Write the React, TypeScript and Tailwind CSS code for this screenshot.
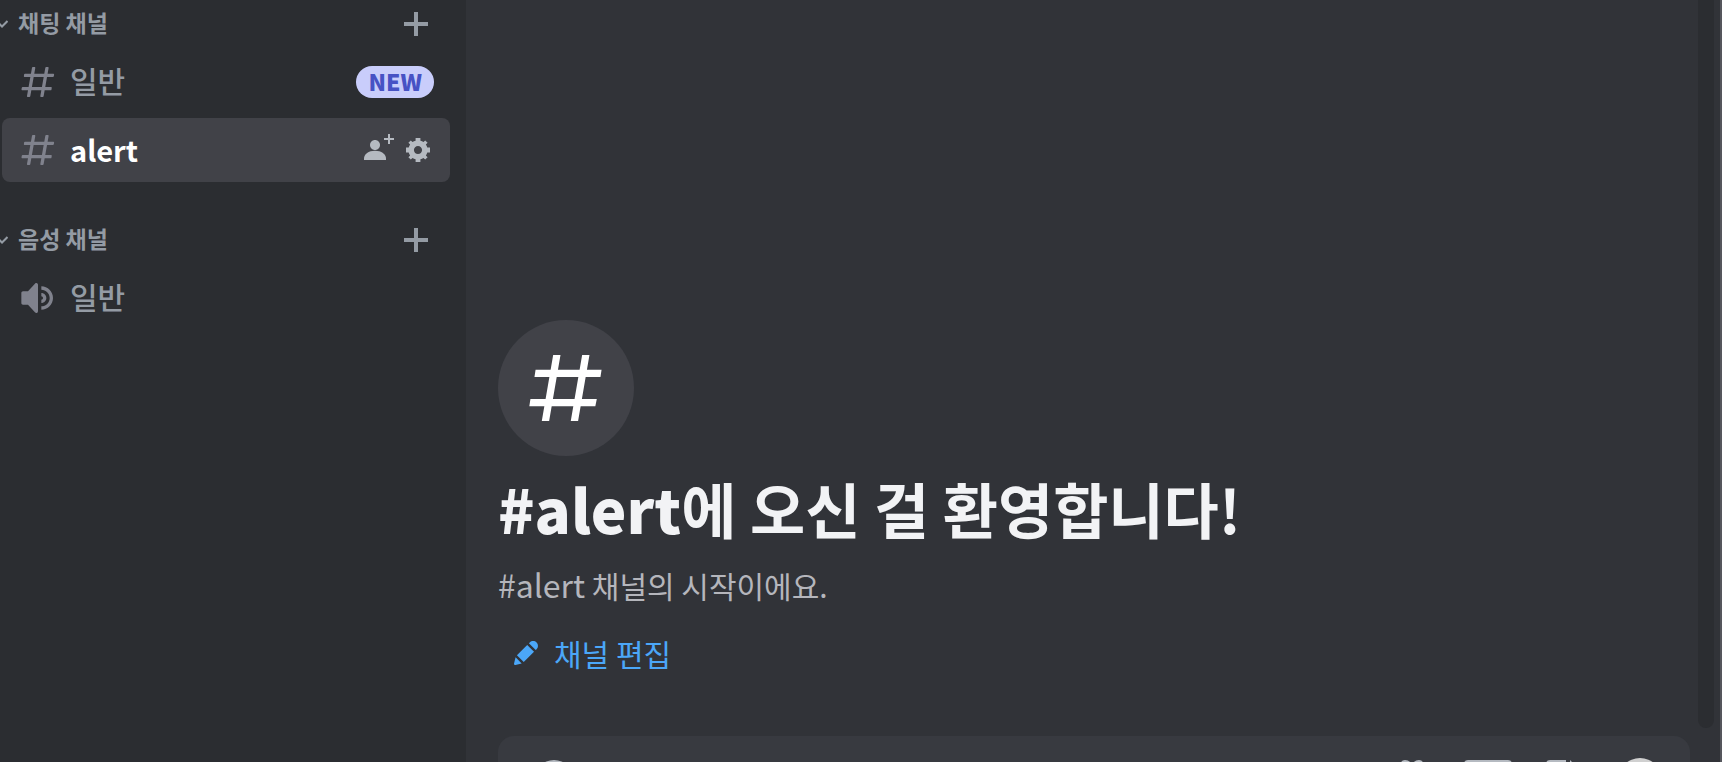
import React from 'react';

interface IconProps {
  className?: string;
}

interface CategoryProps {
  name: string;
  className?: string;
  children: React.ReactNode;
}

function HashIcon({ className }: IconProps) {
  return (
    <svg className={className} viewBox="0 0 24 24" fill="currentColor" aria-hidden="true">
      <path
        fillRule="evenodd"
        clipRule="evenodd"
        d="M5.88657 21C5.57547 21 5.3399 20.7189 5.39427 20.4126L6.00001 17H2.59511C2.28449 17 2.04905 16.7198 2.10259 16.4138L2.27759 15.4138C2.31946 15.1746 2.52722 15 2.77011 15H6.35001L7.41001 9H4.00511C3.69449 9 3.45905 8.71977 3.51259 8.41381L3.68759 7.41381C3.72946 7.17456 3.93722 7 4.18011 7H7.76001L8.39677 3.41262C8.43914 3.17391 8.64664 3 8.88907 3H9.87344C10.1845 3 10.4201 3.28107 10.3657 3.58738L9.76001 7H15.76L16.3968 3.41262C16.4391 3.17391 16.6466 3 16.8891 3H17.8734C18.1845 3 18.4201 3.28107 18.3657 3.58738L17.76 7H21.1649C21.4755 7 21.711 7.28023 21.6574 7.58619L21.4824 8.58619C21.4406 8.82544 21.2328 9 20.9899 9H17.41L16.35 15H19.7549C20.0655 15 20.301 15.2802 20.2474 15.5862L20.0724 16.5862C20.0306 16.8254 19.8228 17 19.5799 17H16L15.3632 20.5874C15.3209 20.8261 15.1134 21 14.8709 21H13.8866C13.5755 21 13.3399 20.7189 13.3943 20.4126L14 17H8.00001L7.36325 20.5874C7.32088 20.8261 7.11337 21 6.87094 21H5.88657ZM9.41045 9L8.35045 15H14.3504L15.4104 9H9.41045Z"
      />
    </svg>
  );
}

function SpeakerIcon({ className }: IconProps) {
  return (
    <svg className={className} viewBox="0 0 24 24" fill="currentColor" aria-hidden="true">
      <path d="M11.383 3.079C11.009 2.925 10.579 3.01 10.293 3.296L6 8.002H3C2.45 8.002 2 8.453 2 9.002V15.002C2 15.552 2.45 16.002 3 16.002H6L10.293 20.71C10.579 20.996 11.009 21.082 11.383 20.927C11.757 20.772 12 20.407 12 20.002V4.002C12 3.599 11.757 3.232 11.383 3.079ZM14 5.002V7.002C16.757 7.002 19 9.246 19 12.002C19 14.759 16.757 17.002 14 17.002V19.002C17.86 19.002 21 15.863 21 12.002C21 8.143 17.86 5.002 14 5.002ZM14 9.002C15.654 9.002 17 10.349 17 12.002C17 13.657 15.654 15.002 14 15.002V13.002C14.551 13.002 15 12.553 15 12.002C15 11.451 14.551 11.002 14 11.002V9.002Z" />
    </svg>
  );
}

function PlusIcon({ className }: IconProps) {
  return (
    <svg className={className} viewBox="0 0 24 24" fill="currentColor" aria-hidden="true">
      <path d="M10 0H14V10H24V14H14V24H10V14H0V10H10Z" />
    </svg>
  );
}

function InviteIcon({ className }: IconProps) {
  return (
    <svg className={className} viewBox="0 0 16 16" fill="currentColor" aria-hidden="true">
      <path d="M14 2H16V3H14V5H13V3H11V2H13V0H14V2Z" />
      <path d="M6.5 8.007C7.88 8.007 9 6.887 9 5.507C9 4.127 7.88 3.007 6.5 3.007C5.12 3.007 4 4.127 4 5.507C4 6.887 5.12 8.007 6.5 8.007Z" />
      <path d="M6.5 8.34C3.26 8.34 1 9.98 1 12.34V13.007H12V12.34C12 9.98 9.74 8.34 6.5 8.34Z" />
    </svg>
  );
}

function GearIcon({ className }: IconProps) {
  return (
    <svg className={className} viewBox="2 2 20 20" fill="currentColor" aria-hidden="true">
      <path
        fillRule="evenodd"
        clipRule="evenodd"
        d="M19.738 10H22V14H19.739C19.498 14.931 19.1 15.798 18.565 16.564L20 18L18 20L16.565 18.564C15.797 19.099 14.932 19.498 14 19.738V22H10V19.738C9.069 19.498 8.203 19.099 7.436 18.564L6 20L4 18L5.436 16.564C4.901 15.799 4.502 14.932 4.262 14H2V10H4.262C4.502 9.068 4.9 8.202 5.436 7.436L4 6L6 4L7.436 5.436C8.202 4.9 9.068 4.502 10 4.262V2H14V4.261C14.932 4.502 15.797 4.9 16.565 5.435L18 3.999L20 5.999L18.564 7.436C19.099 8.202 19.498 9.069 19.738 10ZM12 15.4C13.878 15.4 15.4 13.878 15.4 12C15.4 10.122 13.878 8.6 12 8.6C10.122 8.6 8.6 10.122 8.6 12C8.6 13.878 10.122 15.4 12 15.4Z"
      />
    </svg>
  );
}

function PencilIcon({ className }: IconProps) {
  return (
    <svg className={className} viewBox="0 0 24 24" fill="currentColor" aria-hidden="true">
      <path d="M19.2929 9.8299L19.9409 9.18278C21.353 7.77064 21.353 5.47197 19.9409 4.05892C18.5287 2.64678 16.2292 2.64678 14.817 4.05892L14.1699 4.70694L19.2929 9.8299ZM12.8962 5.97688L5.18469 13.6906L10.3085 18.813L18.0201 11.0992L12.8962 5.97688ZM4.11851 20.9704L8.75906 19.8112L4.18692 15.239L3.02678 19.8796C2.95028 20.1856 3.04028 20.5105 3.26349 20.7337C3.48669 20.9569 3.8116 21.046 4.11851 20.9704Z" />
    </svg>
  );
}

function Category({ name, className, children }: CategoryProps) {
  return (
    <section className={className}>
      <div className="flex h-12 items-center justify-between pr-[38px] text-[#949ba4]">
        <button className="flex items-center gap-[10px] text-[23px] leading-8 font-bold">
          <svg className="h-4 w-2" viewBox="4 0 8 16" fill="none" stroke="currentColor" strokeWidth="2" aria-hidden="true">
            <path d="M1 5.5L6 10.5L11.5 5" />
          </svg>
          <span className="pb-1">{name}</span>
        </button>
        <button aria-label="채널 만들기">
          <PlusIcon className="size-6" />
        </button>
      </div>
      <ul className="flex flex-col gap-1 pt-[2px] pr-4 pl-[2px]">{children}</ul>
    </section>
  );
}

export default function App() {
  return (
    <div className="flex h-screen overflow-hidden border-r-2 border-[#55565c] bg-[#313338] font-['Noto_Sans_CJK_KR',sans-serif]">
      <nav className="w-[466px] shrink-0 bg-[#2b2d31] text-[30px] leading-10 font-medium text-[#949ba4]">
        <Category name="채팅 채널">
          <li className="flex h-16 items-center rounded-lg pr-4 pl-4">
            <a href="#general" className="flex flex-1 items-center gap-3">
              <HashIcon className="size-10 text-[#80828d]" />
              <span className="pb-1">일반</span>
            </a>
            <span className="flex h-8 items-center rounded-full bg-[#c9cdfb] px-3 pb-[2px] text-[23px] leading-8 font-black text-[#4752c4]">NEW</span>
          </li>
          <li className="flex h-16 items-center rounded-lg bg-[#414248] pr-5 pl-4">
            <a href="#alert" className="flex flex-1 items-center gap-3 text-white">
              <HashIcon className="size-10 text-[#80828d]" />
              <span className="pb-[2px] text-[29px] font-bold">alert</span>
            </a>
            <div className="flex items-center gap-3 text-[#b5bac1]">
              <button aria-label="초대하기">
                <InviteIcon className="size-8" />
              </button>
              <button aria-label="채널 설정">
                <GearIcon className="size-6" />
              </button>
            </div>
          </li>
        </Category>

        <Category name="음성 채널" className="mt-[34px]">
          <li className="flex h-16 items-center rounded-lg pl-4">
            <a href="#voice" className="flex flex-1 items-center gap-3">
              <SpeakerIcon className="size-10 text-[#80828d]" />
              <span className="pb-1">일반</span>
            </a>
          </li>
        </Category>
      </nav>

      <main className="flex min-w-0 flex-1 flex-col">
        <div className="flex min-h-0 flex-1 justify-between pr-[6px] pb-2">
          <div className="flex flex-col items-start justify-end pb-[43px] pl-8">
            <div className="flex size-[136px] items-center justify-center rounded-full bg-[#414248]">
              <svg className="size-[88px] text-white" viewBox="0 0 24 24" fill="currentColor" aria-hidden="true">
                <path d="M8.500 3H10.500L7.400 21H5.400ZM16.400 3H18.400L15.300 21H13.300Z" />
                <path d="M3.700 7H21.700L21.400 9H3.400ZM2.300 15H20.400L20 17H2Z" />
              </svg>
            </div>
            <h1 className="mt-3 text-[60px] leading-20 font-bold text-[#f2f3f5]">
              <span className="font-black">#alert</span>에 오신 걸 환영합니다!
            </h1>
            <p className="mt-4 text-[30px] leading-10 text-[#b5b6bc]">
              <span className="text-[32px]">#alert</span> 채널의 시작이에요.
            </p>
            <button className="mt-4 flex h-16 items-center gap-3 pl-3 text-[30px] leading-10 text-[#4ba7f8]">
              <PencilIcon className="size-8" />
              채널 편집
            </button>
          </div>
          <div className="w-4 rounded-b-full bg-[#2b2d31]" />
        </div>

        {/* Composer, mostly below the fold */}
        <form className="mr-[30px] -mb-[62px] ml-8 flex h-[88px] shrink-0 items-center rounded-2xl bg-[#383a40] pr-[26px] pl-8 text-[#b5bac1]">
          <button type="button" aria-label="파일 첨부">
            <svg className="size-12" viewBox="0 0 24 24" fill="currentColor" aria-hidden="true">
              <path fillRule="evenodd" d="M12 2A10 10 0 1 0 12 22A10 10 0 0 0 12 2ZM17 13H13V17H11V13H7V11H11V7H13V11H17Z" />
            </svg>
          </button>
          <input type="text" aria-label="메시지" className="h-full min-w-0 flex-1 bg-transparent px-6 text-[30px] outline-none" />
          <div className="flex items-center gap-7">
            <button type="button" aria-label="선물">
              <svg className="size-12" viewBox="0 0 24 24" fill="none" stroke="currentColor" strokeWidth="2" aria-hidden="true">
                <path d="M3 8H21V12H3ZM4.500 12V21H19.500V12M12 8V21M12 8C7 8 6 3 8.500 3C11 3 12 6 12 8C12 6 13 3 15.500 3C18 3 17 8 12 8" />
              </svg>
            </button>
            <button type="button" aria-label="GIF">
              <svg className="size-12" viewBox="0 0 24 24" fill="currentColor" aria-hidden="true">
                <rect y="2" width="24" height="20" rx="2" />
              </svg>
            </button>
            <button type="button" aria-label="스티커">
              <svg className="size-12" viewBox="0 0 24 24" fill="currentColor" aria-hidden="true">
                <path d="M5 2H13V9H20V20A2 2 0 0 1 18 22H5A2 2 0 0 1 3 20V4A2 2 0 0 1 5 2ZM15 2L20 7H15Z" />
              </svg>
            </button>
            <button type="button" aria-label="이모지">
              <svg className="size-12" viewBox="0 0 24 24" fill="#d0d0d0" aria-hidden="true">
                <circle cx="12" cy="12" r="11" />
              </svg>
            </button>
          </div>
        </form>
      </main>
    </div>
  );
}
